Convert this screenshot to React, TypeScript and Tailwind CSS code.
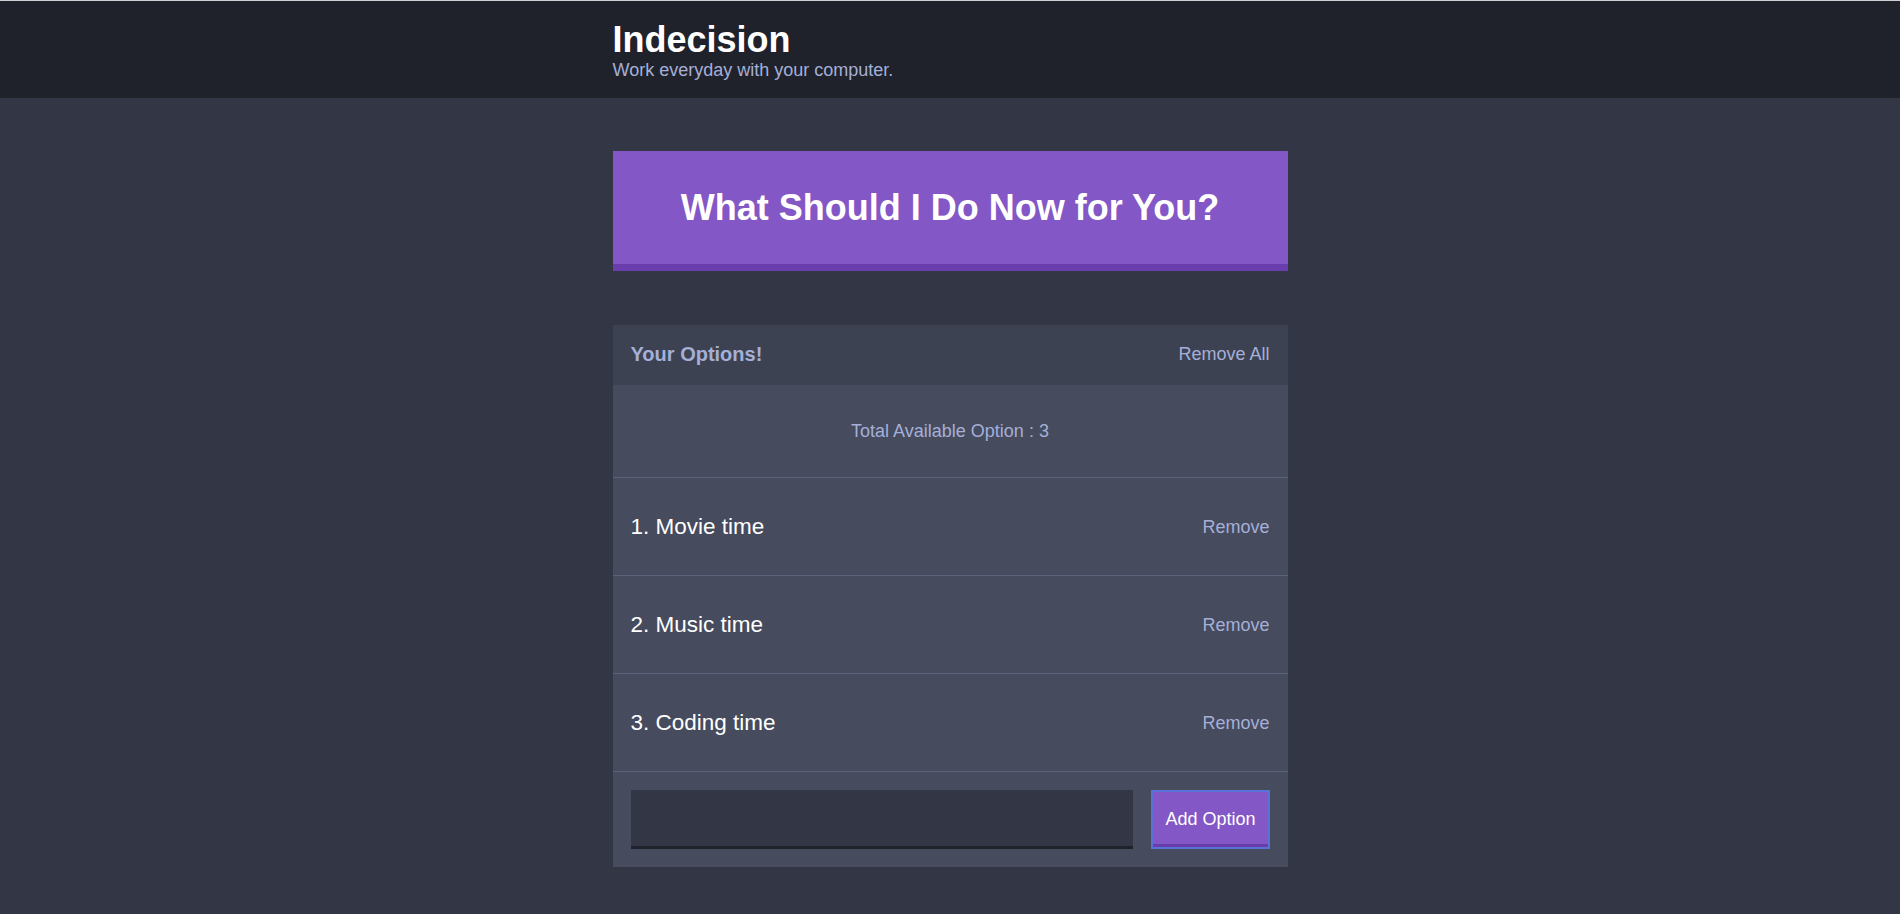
import React from "react";

const OPTIONS = ["Movie time", "Music time", "Coding time"];

export default function App() {
  return (
    <div className="min-h-screen bg-[#333745] font-['Liberation_Sans',Arial,sans-serif]">
      {/* Header */}
      <header className="bg-[#20222b] border-t border-[#cfd0d4] pt-[18px] pb-[17px]">
        <div className="w-[675px] mx-auto">
          <h1 className="text-white text-[36px] leading-[41px] font-bold">Indecision</h1>
          <h2 className="text-[#a5afd7] text-[18px] leading-[21px]">Work everyday with your computer.</h2>
        </div>
      </header>

      <div className="w-[675px] mx-auto pt-[53px] pb-[44px]">
        {/* Big button */}
        <button className="w-full bg-[#8357c5] border-b-[7px] border-[#6a3dad] py-[36px] text-white text-[36px] leading-[41px] font-bold">
          What Should I Do Now for You?
        </button>

        {/* Widget */}
        <div className="mt-[54px] bg-[#464b5e]">
          <div className="flex items-center justify-between bg-[#3c4251] px-[18px] pt-[18px] pb-[19px]">
            <h3 className="text-[#a5afd7] text-[20px] leading-[23px] font-bold">Your Options!</h3>
            <button className="text-[#a5afd7] text-[18px] leading-[21px]">Remove All</button>
          </div>

          <p className="text-center text-[#a5afd7] text-[18px] leading-[21px] pt-[36px] pb-[35px] border-b border-[#5c627b]">
            Total Available Option : 3
          </p>

          {OPTIONS.map((opt, i) => (
            <div
              key={opt}
              className="flex items-center justify-between px-[18px] pt-[36px] pb-[35px] border-b border-[#5c627b]"
            >
              <p className="text-white text-[22.5px] leading-[26px]">
                {i + 1}. {opt}
              </p>
              <button className="text-[#a5afd7] text-[18px] leading-[21px]">Remove</button>
            </div>
          ))}

          {/* Add option */}
          <form className="flex gap-[18px] p-[18px]" onSubmit={(e) => e.preventDefault()}>
            <input
              type="text"
              className="flex-1 h-[59px] bg-[#333745] border-b-[3px] border-[#20222b] text-white text-[18px] px-[13px] outline-none"
            />
            <button className="border-2 border-[#5a72d8] bg-[#8357c5] text-white text-[18px] leading-[21px] px-[12px] shadow-[inset_0_-3px_0_#6a3dad]">
              Add Option
            </button>
          </form>
        </div>
      </div>
    </div>
  );
}
